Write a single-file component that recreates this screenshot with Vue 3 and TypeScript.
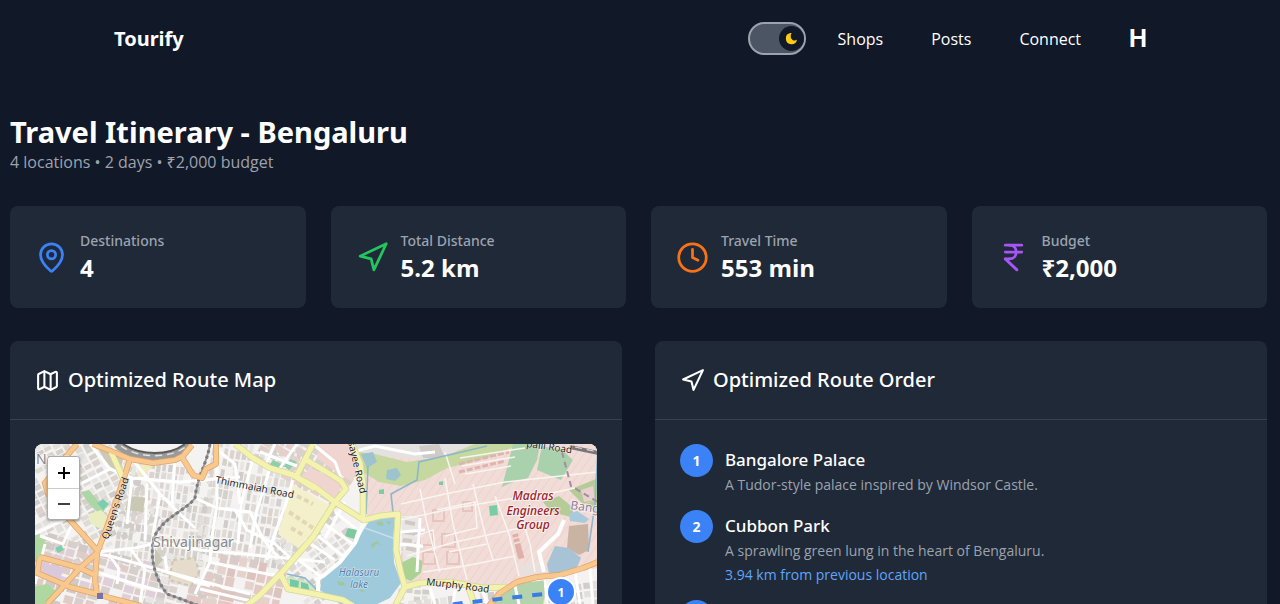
<script setup lang="ts">
import { ref } from 'vue'

interface Stat {
  label: string
  value: string
  tone: string
  paths: string[]
}

interface Stop {
  id: number
  name?: string
  description?: string
  distance?: string
}

interface District {
  x: number
  y: number
  w: number
  h: number
  angle: number
  cellW: number
  cellH: number
  fills: string[]
}

const darkMode = ref(true)

const navigationPath = 'M3 11 22 2 13 21 11 13z'

const stats: Stat[] = [
  {
    label: 'Destinations',
    value: '4',
    tone: 'tone-blue',
    paths: [
      'M20 10c0 4.993-5.539 10.193-7.399 11.799a1 1 0 0 1-1.202 0C9.539 20.193 4 14.993 4 10a8 8 0 0 1 16 0',
      'M15 10a3 3 0 1 1-6 0a3 3 0 0 1 6 0',
    ],
  },
  { label: 'Total Distance', value: '5.2 km', tone: 'tone-green', paths: [navigationPath] },
  {
    label: 'Travel Time',
    value: '553 min',
    tone: 'tone-orange',
    paths: ['M22 12a10 10 0 1 1-20 0a10 10 0 0 1 20 0', 'M12 6v6l4 2'],
  },
  {
    label: 'Budget',
    value: '₹2,000',
    tone: 'tone-purple',
    paths: ['M6 3h12', 'M6 8h12', 'm6 13 8.5 8', 'M6 13h3', 'M9 13c6.667 0 6.667-10 0-10'],
  },
]

const stops: Stop[] = [
  { id: 1, name: 'Bangalore Palace', description: 'A Tudor-style palace inspired by Windsor Castle.' },
  {
    id: 2,
    name: 'Cubbon Park',
    description: 'A sprawling green lung in the heart of Bengaluru.',
    distance: '3.94 km from previous location',
  },
  { id: 3 },
]

// Small deterministic generator so that the building footprints are stable.
let seed = 17
function random(): number {
  seed = (seed * 1103515245 + 12345) % 2147483648
  return seed / 2147483648
}

const greys = ['#dedad6', '#d4d0cc', '#e2dfdc', '#dcd3ce', '#cfccca', '#e8e6e3']
const pinks = ['#e3c9c4', '#dcc3be', '#e6d2cd', '#d9ccc8']

const districts: District[] = [
  { x: -30, y: -10, w: 130, h: 120, angle: -28, cellW: 9, cellH: 7, fills: greys },
  { x: 85, y: 20, w: 90, h: 100, angle: 8, cellW: 6, cellH: 9, fills: greys },
  { x: 170, y: -10, w: 100, h: 125, angle: 10, cellW: 6, cellH: 10, fills: greys },
  { x: 0, y: 105, w: 130, h: 80, angle: 16, cellW: 11, cellH: 9, fills: ['#d6cfcc', '#cfc9c8', '#decfd8', '#dfccc7'] },
  { x: 115, y: 112, w: 65, h: 60, angle: 14, cellW: 10, cellH: 8, fills: greys },
  { x: 172, y: 114, w: 75, h: 34, angle: 12, cellW: 10, cellH: 11, fills: pinks },
  { x: 150, y: 145, w: 80, h: 40, angle: 12, cellW: 16, cellH: 12, fills: pinks },
  { x: 225, y: -10, w: 95, h: 50, angle: 30, cellW: 11, cellH: 9, fills: ['#ddd0cb', '#d8d2ce', '#e5d0cb'] },
  { x: 245, y: 75, w: 80, h: 75, angle: -36, cellW: 8, cellH: 7, fills: greys },
  { x: 365, y: 74, w: 30, h: 100, angle: 4, cellW: 8, cellH: 7, fills: greys },
  { x: 375, y: 146, w: 190, h: 50, angle: -6, cellW: 8, cellH: 9, fills: greys },
]

const buildings = districts.map((district) => {
  const cells: { x: number; y: number; w: number; h: number; fill: string }[] = []
  for (let y = 0; y < district.h; y += district.cellH) {
    for (let x = 0; x < district.w; x += district.cellW) {
      if (random() < 0.1) continue
      const inset = 1 + random() * 1.6
      cells.push({
        x: district.x + x,
        y: district.y + y + random() * 2,
        w: district.cellW - inset,
        h: district.cellH - 1 - random() * 2,
        fill: district.fills[Math.floor(random() * district.fills.length)],
      })
    }
  }
  return {
    transform: `rotate(${district.angle} ${district.x + district.w / 2} ${district.y + district.h / 2})`,
    cells,
  }
})

const lanes = [
  'M55 0 75 25 97 34 145 38 205 33',
  'M75 25 45 40 12 48',
  'M98 16 125 50 145 70 160 84',
  'M62 108 100 104 125 98 165 106 240 113 290 118',
  'M62 110 75 112 140 130 215 150',
  'M33 74 0 90M33 74 62 106M10 100 0 140M38 78 28 100 5 92',
  'M140 16 137 60M112 40 110 96M125 50 118 92M97 34 92 80',
  'M160 54 182 64 215 68 228 95 242 112M182 20 182 60 176 100 175 118 160 150',
  'M218 14 206 60 203 100M235 24 222 66 215 104M258 36 250 62 238 95 232 116',
  'M200 66 212 86 240 100 262 120M175 0 200 20 205 60',
  'M175 118 205 125 245 132M165 145 220 158M130 112 132 128 175 142',
  'M75 112 84 125 82 140M95 104 110 125 105 160M62 128 100 140 130 148',
  'M240 0 230 22M262 0 245 24M225 8 262 22M278 0 300 18 308 39',
  'M270 96 300 116M258 112 285 132M290 80 318 100M300 68 325 88M283 92 308 112M310 58 290 94',
  'M317 8 340 2 380 10 400 8M365 88 390 86M365 100 388 102M385 74 382 128',
  'M395 144 400 160M420 146 418 160M448 148 452 160M480 142 484 160M510 134 512 160M540 128 545 160M555 124 558 160',
]

const campLanes = [
  'M366 60 410 50 470 38 563 28',
  'M372 112 420 98 485 84M365 76 420 64 480 54',
  'M385 45 392 80 405 128M410 34 418 80 432 136M438 40 450 90 458 116',
  'M460 52 474 90 484 132M402 66 440 58 442 84 410 92M380 92 398 86 400 106',
  'M388 128 430 122 480 112M414 108 452 100M484 64 495 100 500 128M494 54 540 44',
  'M410 8 420 40M425 14 490 4M427 22 480 13M430 30 476 22',
]

const orangeRoads = [
  'M42 0 28 16 10 39 13 50 33 74 62 106',
  'M95 15 85 46 72 83 62 109',
  'M58 0 78 8 95 15 118 19 140 16 148 12 157 1',
  'M147 13 158 31 167 34 171 25 181 20 181 0',
  'M62 109 45 124 25 146 12 160',
  'M62 109 60 136 62 150 75 154 106 162',
  'M5 113 45 124 62 132M5 113 2 129 35 143 62 150',
]

const yellowRoads = [
  'M200 0 218 14 235 24 258 31 280 45',
  'M278 0 262 31M268 14 290 27 306 37 311 45 300 58',
  'M258 31 280 43 300 58 330 77',
  'M300 58 278 93 248 127 225 151 211 162',
  'M246 131 253 145 280 150 308 156 318 162',
  'M317 0 325 19 328 39 328 76',
  'M329 76 345 72 363 70 361 106 366 129 370 143 360 162',
  'M370 143 385 139 415 138 448 144 472 143',
  'M433 142 440 162M76 8 88 34',
]

const pinkBlocks = [
  { x: 398, y: 66, s: 11 },
  { x: 385, y: 88, s: 13 },
  { x: 407, y: 90, s: 13 },
  { x: 388, y: 108, s: 12 },
  { x: 412, y: 108, s: 12 },
  { x: 428, y: 58, s: 9 },
]
</script>

<template>
  <div class="page">
    <header class="topbar">
      <a class="brand" href="#">Tourify</a>
      <nav class="nav">
        <label class="theme-switch">
          <input v-model="darkMode" type="checkbox" aria-label="Dark mode" />
          <span class="knob">
            <svg viewBox="0 0 16 16" aria-hidden="true">
              <path d="M7 2.2A6 6 0 1 0 13.9 9.1 4.1 4.1 0 0 1 7.2 5.2 4.2 4.2 0 0 1 8.2 2.1 6 6 0 0 0 7 2.2z" />
            </svg>
          </span>
        </label>
        <a href="#">Shops</a>
        <a href="#">Posts</a>
        <a href="#">Connect</a>
        <a class="profile" href="#">H</a>
      </nav>
    </header>

    <main class="content">
      <h1>Travel Itinerary - Bengaluru</h1>
      <p class="summary">4 locations • 2 days • ₹2,000 budget</p>

      <section class="stats">
        <article v-for="stat in stats" :key="stat.label" class="card stat">
          <svg class="icon stat-icon" :class="stat.tone" viewBox="0 0 24 24" aria-hidden="true">
            <path v-for="d in stat.paths" :key="d" :d="d" />
          </svg>
          <div>
            <p class="stat-label">{{ stat.label }}</p>
            <p class="stat-value">{{ stat.value }}</p>
          </div>
        </article>
      </section>

      <div class="panels">
        <section class="card">
          <header class="panel-head">
            <svg class="icon head-icon" viewBox="0 0 24 24" aria-hidden="true">
              <path
                d="M14.106 5.553a2 2 0 0 0 1.788 0l3.659-1.83A1 1 0 0 1 21 4.619v12.764a1 1 0 0 1-.553.894l-4.553 2.277a2 2 0 0 1-1.788 0l-4.212-2.106a2 2 0 0 0-1.788 0l-3.659 1.83A1 1 0 0 1 3 19.381V6.618a1 1 0 0 1 .553-.894l4.553-2.277a2 2 0 0 1 1.788 0z"
              />
              <path d="M15 5.764v15M9 3.236v15" />
            </svg>
            <h2>Optimized Route Map</h2>
          </header>
          <div class="panel-body">
            <div class="map">
              <svg class="map-art" viewBox="0 0 563 400" preserveAspectRatio="xMinYMin slice">
                <defs>
                  <pattern id="hatch" width="7" height="7" patternUnits="userSpaceOnUse" patternTransform="rotate(35)">
                    <rect width="7" height="7" fill="#f2dcd7" />
                    <path d="M0 0V7" stroke="#eccfc9" stroke-width="1.4" />
                  </pattern>
                </defs>
                <rect width="563" height="400" fill="#f5f3f1" />

                <g v-for="(group, g) in buildings" :key="g" :transform="group.transform">
                  <rect
                    v-for="(cell, c) in group.cells"
                    :key="c"
                    :x="cell.x"
                    :y="cell.y"
                    :width="cell.w"
                    :height="cell.h"
                    :fill="cell.fill"
                  />
                </g>

                <!-- parks, grounds and estates -->
                <path d="M0 88 8 92 12 104 0 118zM0 142 12 140 26 150 12 164 0 164z" fill="#aed89f" />
                <path d="M46 48 54 46 64 58 72 62 66 72 54 60z" fill="#acd6a5" />
                <path d="m62 59 6-4 6 5-6 6z" fill="#7ccfae" />
                <path d="m54 70 12-4 8 8-6 12-12-6z" fill="#e9edc0" />
                <path d="M60 0 90 10 84 28 74 22z" fill="#cdc8b6" />
                <path d="M94 52 110 54 108 68 90 66zM120 104 128 116 120 124z" fill="#c9c8b4" />
                <path d="M4 118 30 124 24 136 4 130z" fill="#d9c9da" />
                <path d="M100 20 118 22 106 34z" fill="#f1ecbd" />
                <path d="m20 104 6-3 3 5-6 3z" fill="#7ccfae" />
                <path d="M258 40 296 62 266 106 243 90z" fill="#f4f0cb" />
                <path
                  d="m262 52 16 8M254 68l24 16M256 84l14 8"
                  stroke="#dfd8b4"
                  stroke-width="4"
                  stroke-dasharray="5 3"
                />
                <path d="m238 16 12 6-8 4-8-4zM262 18l-8 8-5-4 6-7z" fill="#8bd0ab" />
                <path d="m276 24 26 12 4 8-6 10-34-22z" fill="#f0d4cf" />
                <path d="M284 0 314 0 322 18 318 38 304 30 282 14z" fill="#f0d4cf" />
                <path d="M252 132 274 138 284 150 256 146z" fill="#cfe5c4" />
                <path d="m255 135 9 2-1 9-8-1zM266 138l7 2 2 9-9-1z" fill="#72c9a6" />
                <path
                  d="m138 116 22-2 4 14-8 14-22-6z"
                  fill="#e5dccb"
                  stroke="#cfc6b4"
                  stroke-width="2"
                  stroke-dasharray="4 3"
                />

                <path
                  d="M320 0H563V124L520 132 482 138 466 146 372 140 366 108 388 104 382 72 332 72z"
                  fill="url(#hatch)"
                />
                <path d="M366 72 385 74 390 92 378 100 384 128 370 138z" fill="#e9e6e3" />
                <path
                  d="m370 78 10 2M369 88l14 2M368 96l9 1M371 104l10 2M372 126l12 2"
                  stroke="#cfcac6"
                  stroke-width="4"
                />
                <path d="M318 0H440L395 16 350 12 322 16z" fill="#e4e2e0" />
                <path d="M384 2 404 0 410 14 388 14z" fill="#cfcac6" />
                <path d="M322 8 340 10 372 18 410 12 440 0H486L452 14 412 24 390 36 366 42 344 38 328 28z" fill="#c4d8a0" />
                <path d="M326 10 338 8 342 18 332 24zM352 26l10-2 4 7-6 6-9-2z" fill="#9dc3cf" />
                <path d="M467 43 478 0H505L502 16 493 34 478 38zM507 2 528 6 538 16 526 36 502 26z" fill="#a9d1ab" />
                <path d="M528 6 545 12 563 10 563 36 526 38 538 16z" fill="url(#hatch)" />
                <path d="M508 58 524 52 536 62 540 74 516 68zM534 46 563 34 563 56 548 60zM550 60l13-4V70z" fill="#b5cc98" />
                <path d="M546 46 558 42 560 56 549 58z" fill="#e8d0d0" />
                <path d="m534 70 8-3 12 8-4 4-15-2z" fill="#a9c9dc" />
                <path d="M534 82 553 80 554 106 544 111 532 104z" fill="#c9b4a3" />
                <path d="M512 120 520 102 534 104 546 114 540 128 514 130z" fill="#a8c3d6" />
                <path d="m484 122 14-6 12 12-26 6z" fill="#e9dfdc" />
                <path d="m366 119 12-6 10 4-2 12-10 8-10-4z" fill="#a9d293" />
                <path d="m454 62 8-1 1 10-8 1z" fill="#77cda4" />
                <path d="m344 46 5-1v5h-5zM404 38l4-1v4h-4z" fill="#77cda4" />
                <path d="m480 90 6 24M483 102l4 14" stroke="#dfb0aa" stroke-width="6" stroke-dasharray="3 2" />
                <path d="m424 20 50-12M424 28l46-11" stroke="#dfb4ae" stroke-width="3" stroke-dasharray="6 2" />
                <path d="M465 151 486 139 512 136 508 162 458 162z" fill="#b2d3ac" />
                <rect
                  v-for="(block, i) in pinkBlocks"
                  :key="i"
                  :x="block.x"
                  :y="block.y"
                  :width="block.s"
                  :height="block.s"
                  fill="none"
                  stroke="#e8c4be"
                  stroke-width="2"
                />

                <path v-for="d in campLanes" :key="d" :d="d" fill="none" stroke="#f9f5f2" stroke-width="1.5" />
                <path d="M331 70 333 22M358 68 356 50 382 36 384 18 452 2" class="stream" />
                <path d="M563 2 560 60 553 108M252 130 270 134 284 148" class="stream" />
                <path v-for="d in lanes" :key="d" :d="d" class="lane" />

                <!-- lake -->
                <path
                  d="M335 76 360 73 358 96 359 119 366 139 355 154 338 162H308L285 146 287 134 305 119 320 99z"
                  fill="#9fcadb"
                />
                <path
                  d="m341 79 6-2 2 4-5 1zM352 77l5 1-4 3zM336 100l6-3 4 4-5-1-4 5zM302 137l7 1 1 4-7-1zM324 146l5-1-1 4z"
                  fill="#9fc79f"
                />
                <path d="M330 84 358 94" stroke="#c7dee6" stroke-width="1.5" />
                <path d="M329 78 320 99 305 118 288 132 280 136M283 136V152" class="lane wide" />
                <path d="m313 84 9 2-3 9-9-3z" fill="#7ec9a0" />

                <!-- railways -->
                <path d="M82 0C102 18 138 16 156 0" fill="none" stroke="#9b9a9a" stroke-width="8" />
                <path d="M88 0C106 12 134 12 150 0" fill="none" stroke="#5d5d60" stroke-width="2" />
                <path
                  d="M86 2C104 15 136 15 152 2"
                  fill="none"
                  stroke="#e3e3e3"
                  stroke-width="1.5"
                  stroke-dasharray="7 5"
                />
                <path d="M175 0C172 20 162 32 160 54 152 66 126 74 119 94 113 118 124 140 132 150L165 162" class="rail" />
                <path
                  d="M175 0C172 20 162 32 160 54 152 66 126 74 119 94 113 118 124 140 132 150L165 162"
                  class="rail-dash"
                />
                <path d="M527 8 536 42 563 58" fill="none" stroke="#a58ca0" stroke-width="2" stroke-dasharray="6 4" />
                <path d="M535 3 563 9" stroke="#77767a" stroke-width="4" />
                <path d="M540 3 563 8" stroke="#dededf" stroke-width="1.2" stroke-dasharray="7 5" />
                <path d="M529 76 523 90 504 108 509 128" class="lane wide" />

                <!-- main roads -->
                <path v-for="d in yellowRoads" :key="`c${d}`" :d="d" class="road yellow-case" />
                <path v-for="d in orangeRoads" :key="`c${d}`" :d="d" class="road orange-case" />
                <path v-for="d in yellowRoads" :key="d" :d="d" class="road yellow-fill" />
                <path v-for="d in orangeRoads" :key="d" :d="d" class="road orange-fill" />
                <path d="M452 164 465 149 482 138 502 133 525 131 548 124 563 118" class="road orange-case" />
                <path d="M452 164 465 149 482 138 502 133 525 131 548 124 563 118" class="road orange-fill" />
                <rect x="62" y="149" width="6" height="6" fill="#7473ad" />

                <!-- place names -->
                <g class="labels">
                  <text x="1" y="20" class="place">Nagar</text>
                  <text x="118" y="103" class="place">Shivajinagar</text>
                  <text x="180" y="39" class="street" transform="rotate(11 180 39)">Thimmaiah Road</text>
                  <text x="73" y="96" class="street" transform="rotate(-71 73 96)">Queen's Road</text>
                  <text x="313" y="-2" class="street" transform="rotate(77 313 -2)">sayee Road</text>
                  <text x="391" y="141" class="street" transform="rotate(7 391 141)">Murphy Road</text>
                  <text x="491" y="3" class="street" transform="rotate(8 491 3)">palli Road</text>
                  <text class="water" text-anchor="middle">
                    <tspan x="324" y="132">Halasuru</tspan>
                    <tspan x="324" y="144">lake</tspan>
                  </text>
                  <text x="498" y="56" class="camp" text-anchor="middle">Madras</text>
                  <text x="498" y="71" class="camp" text-anchor="middle">Engineers</text>
                  <text x="498" y="85" class="camp" text-anchor="middle">Group</text>
                  <text x="535" y="65" class="station" transform="rotate(8 535 65)">Banga</text>
                </g>

                <!-- planned route -->
                <path d="M527 148 428 159 380 166" fill="none" stroke="#3b7be8" stroke-width="4" stroke-dasharray="10 10" />
                <circle cx="526" cy="148" r="14" fill="#3b82f6" stroke="#fff" stroke-width="2" />
                <text x="526" y="153" class="pin" text-anchor="middle">1</text>
              </svg>
              <div class="zoom">
                <button type="button" aria-label="Zoom in">
                  <svg viewBox="0 0 14 14" aria-hidden="true"><path d="M1 7h12M7 1v12" /></svg>
                </button>
                <button type="button" aria-label="Zoom out">
                  <svg class="thin" viewBox="0 0 14 14" aria-hidden="true"><path d="M1 7h12" /></svg>
                </button>
              </div>
            </div>
          </div>
        </section>

        <section class="card">
          <header class="panel-head">
            <svg class="icon head-icon" viewBox="0 0 24 24" aria-hidden="true">
              <path :d="navigationPath" />
            </svg>
            <h2>Optimized Route Order</h2>
          </header>
          <ol class="panel-body stops">
            <li v-for="stop in stops" :key="stop.id" class="stop">
              <span class="badge">{{ stop.id }}</span>
              <div>
                <h3 v-if="stop.name">{{ stop.name }}</h3>
                <p v-if="stop.description" class="stop-text">{{ stop.description }}</p>
                <p v-if="stop.distance" class="stop-text stop-distance">{{ stop.distance }}</p>
              </div>
            </li>
          </ol>
        </section>
      </div>
    </main>
  </div>
</template>

<style>
html,
body {
  margin: 0;
  background: #111827;
  scrollbar-width: none;
}
</style>

<style scoped>
.page {
  min-height: 100vh;
  background: #111827;
  color: #fff;
  font-family: 'Open Sans', 'Noto Sans', sans-serif;
}

.page * {
  box-sizing: border-box;
}

h1,
h2,
h3,
p {
  margin: 0;
}

h1,
h2,
h3,
.brand,
.stat-label {
  font-family: 'Noto Sans', 'Open Sans', sans-serif;
}

a {
  color: inherit;
  text-decoration: none;
}

.topbar {
  display: flex;
  align-items: center;
  justify-content: space-between;
  height: 77px;
  padding: 0 133px 0 114px;
}

.brand {
  font-size: 20px;
  font-weight: 700;
}

.nav {
  display: flex;
  align-items: center;
  gap: 48px;
  font-size: 16px;
}

.theme-switch {
  display: flex;
  align-items: center;
  justify-content: flex-start;
  width: 58px;
  height: 33px;
  margin-right: -16px;
  border: 2px solid #9ca3af;
  border-radius: 17px;
  background: #4b5563;
  cursor: pointer;
}

.theme-switch:has(input:checked) {
  justify-content: flex-end;
}

.theme-switch input {
  width: 0;
  height: 0;
  margin: 0;
  appearance: none;
}

.knob {
  display: flex;
  align-items: center;
  justify-content: center;
  width: 25px;
  height: 25px;
  border-radius: 50%;
  background: #111827;
}

.knob svg {
  width: 15px;
  height: 15px;
  fill: #facc15;
}

.profile {
  font-family: Inter, sans-serif;
  font-size: 24px;
  font-weight: 700;
}

.content {
  padding: 37px 13px 32px 10px;
}

h1 {
  font-size: 29px;
  font-weight: 700;
  line-height: 36px;
}

.summary {
  color: #9ca3af;
  font-size: 16px;
  line-height: 24px;
}

.stats {
  display: grid;
  grid-template-columns: repeat(4, 1fr);
  gap: 25px;
  margin-top: 32px;
}

.card {
  border-radius: 8px;
  background: #1f2937;
}

.stat {
  display: flex;
  align-items: center;
  gap: 12px;
  padding: 24px 25px;
}

.icon {
  flex: none;
  fill: none;
  stroke: currentColor;
  stroke-width: 2;
  stroke-linecap: round;
  stroke-linejoin: round;
}

.stat-icon {
  width: 33px;
  height: 33px;
}

.tone-blue {
  color: #3b82f6;
}

.tone-green {
  color: #22c55e;
}

.tone-orange {
  color: #f97316;
}

.tone-purple {
  color: #a855f7;
}

.stat-label {
  color: #9ca3af;
  font-size: 14px;
  font-weight: 500;
  line-height: 22px;
}

.stat-value {
  font-size: 24px;
  font-weight: 700;
  line-height: 32px;
}

.panels {
  display: grid;
  grid-template-columns: repeat(2, 1fr);
  gap: 33px;
  margin-top: 33px;
}

.panel-head {
  display: flex;
  align-items: center;
  gap: 8px;
  padding: 24px 25px;
  border-bottom: 1px solid #374151;
}

.head-icon {
  width: 25px;
  height: 25px;
}

h2 {
  font-size: 20px;
  font-weight: 500;
  line-height: 30px;
}

.panel-body {
  padding: 24px 25px;
}

.map {
  position: relative;
  height: 400px;
  overflow: hidden;
  border-radius: 8px;
  background: #f3f1ef;
}

.map-art {
  display: block;
  width: 100%;
  height: 100%;
}

.lane {
  fill: none;
  stroke: #fff;
  stroke-width: 3;
}

.wide {
  stroke-width: 4;
}

.stream {
  fill: none;
  stroke: #8fb6cb;
  stroke-width: 1.6;
}

.rail {
  fill: none;
  stroke: #9a9a9c;
  stroke-width: 2;
}

.rail-dash {
  fill: none;
  stroke: #7c7c7e;
  stroke-width: 3;
  stroke-dasharray: 3 3;
}

.road {
  fill: none;
  stroke-linejoin: round;
}

.orange-case {
  stroke: #e0a566;
  stroke-width: 6;
}

.orange-fill {
  stroke: #f9c88f;
  stroke-width: 4.5;
}

.yellow-case {
  stroke: #d5d69a;
  stroke-width: 6.5;
}

.yellow-fill {
  stroke: #f3f3ae;
  stroke-width: 5;
}

.labels text {
  font-family: 'Noto Sans', sans-serif;
  paint-order: stroke;
  stroke: rgba(255, 255, 255, 0.6);
  stroke-width: 2px;
}

.labels .street {
  fill: #1f1f1f;
  font-size: 10px;
  stroke-width: 1px;
}

.labels .place {
  fill: #888;
  font-size: 14px;
}

.labels .water {
  fill: #4f80ad;
  font-size: 10px;
  font-style: italic;
  stroke-width: 1px;
}

.labels .camp {
  fill: #9c1f2b;
  font-size: 12px;
  font-style: italic;
  font-weight: 500;
}

.labels .station {
  fill: #8f7f9c;
  font-size: 12px;
}

.pin {
  fill: #fff;
  font-size: 12px;
  font-weight: 700;
}

.zoom {
  position: absolute;
  top: 12px;
  left: 12px;
  display: flex;
  flex-direction: column;
  width: 33px;
  overflow: hidden;
  border: 1px solid #aaa;
  border-radius: 4px;
  background: #fff;
  box-shadow: 0 1px 3px rgba(0, 0, 0, 0.4);
}

.zoom button {
  display: flex;
  align-items: center;
  justify-content: center;
  height: 31px;
  padding: 0;
  border: 0;
  background: #fff;
  cursor: pointer;
}

.zoom button + button {
  border-top: 1px solid #ccc;
}

.zoom svg {
  width: 14px;
  height: 14px;
  fill: none;
  stroke: #000;
  stroke-width: 2;
}

.zoom .thin {
  stroke-width: 1.5;
}

.stops {
  display: flex;
  flex-direction: column;
  gap: 17px;
  margin: 0;
  list-style: none;
}

.stop {
  display: flex;
  gap: 12px;
}

.badge {
  display: flex;
  flex: none;
  align-items: center;
  justify-content: center;
  width: 33px;
  height: 33px;
  border-radius: 50%;
  background: #3b82f6;
  font-size: 14px;
  font-weight: 700;
}

h3 {
  font-size: 17px;
  font-weight: 500;
  line-height: 32px;
}

.stop-text {
  color: #9ca3af;
  font-size: 14px;
  line-height: 17px;
}

.stop-distance {
  margin-top: 7px;
  color: #60a5fa;
}
</style>
